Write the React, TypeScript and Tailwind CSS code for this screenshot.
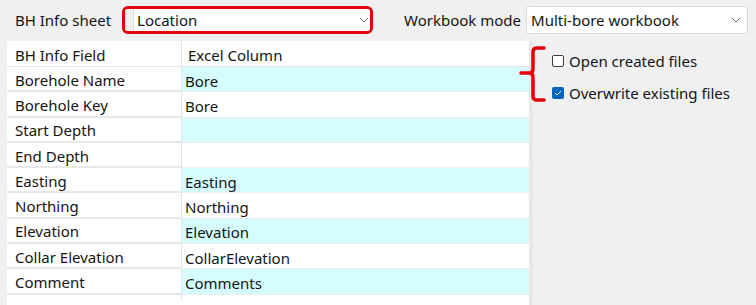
import React from 'react';

const rows = [
  { field: 'Borehole Name', column: 'Bore' },
  { field: 'Borehole Key', column: 'Bore' },
  { field: 'Start Depth', column: '' },
  { field: 'End Depth', column: '' },
  { field: 'Easting', column: 'Easting' },
  { field: 'Northing', column: 'Northing' },
  { field: 'Elevation', column: 'Elevation' },
  { field: 'Collar Elevation', column: 'CollarElevation' },
  { field: 'Comment', column: 'Comments' },
];

const Chevron = () => (
  <svg width="10" height="6" viewBox="0 0 10 6" fill="none" stroke="#6b6b6b" strokeWidth="1">
    <path d="M1 1l4 4 4-4" />
  </svg>
);

const App = () => {
  return (
    <div className="relative w-[756px] h-[305px] overflow-hidden bg-[#f0f0f0] font-['Noto_Sans',sans-serif] text-[15px] leading-[20px] text-[#141414]">
      {/* top bar */}
      <div className="flex items-center h-[41px] pl-[15px] pb-[1px]">
        <span>BH Info sheet</span>
        <div className="ml-[11px] w-[251px] h-[28px] border-[3px] border-[#e4000c] rounded-[6px] flex overflow-hidden">
          <div className="w-[9px] bg-[#f0f0f0] border-r border-[#d9d9d9]" />
          <div className="flex-1 bg-white flex items-center justify-between pl-[3px] pr-[1px]">
            <span>Location</span>
            <Chevron />
          </div>
        </div>
        <span className="ml-[31px]">Workbook mode</span>
        <div className="ml-[5px] w-[222px] h-[28px] bg-white border border-[#d9d9d9] rounded-[3px] flex items-center justify-between pl-[4px] pr-[6px]">
          <span>Multi-bore workbook</span>
          <Chevron />
        </div>
      </div>

      <div className="flex">
        {/* table */}
        <div className="ml-[7px] w-[522px] h-[264px] bg-white">
          <div className="flex h-[26px] border-b border-[#e6e6e6]">
            <div className="w-[175px] border-r border-[#e3e3e3] pl-[8px] flex items-center pt-[2px]">BH Info Field</div>
            <div className="flex-1 pl-[6px] flex items-center pt-[2px]">Excel Column</div>
          </div>
          {rows.map((r, i) => (
            <div key={r.field} className="flex h-[25.3px]">
              <div className="w-[175px] border-r border-[#e3e3e3] border-b-2 border-b-[#e8e8e8] pl-[8px] flex items-center pt-[2px]">
                {r.field}
              </div>
              <div
                className={`flex-1 pl-[3px] flex items-center pt-[3px] border-b border-[#ededed] ${i % 2 === 0 ? 'bg-[#d6fdfe]' : 'bg-white'}`}
              >
                {r.column}
              </div>
            </div>
          ))}
          <div className="w-[175px] h-[6px] border-r border-[#e3e3e3]" />
        </div>
        <div className="w-[4px] h-[264px] bg-[#e8e8e8]" />

        {/* options */}
        <div className="flex flex-col gap-[12px] pt-[10px] pl-[19px]">
          <label className="flex items-center gap-[5px]">
            <span className="w-[12px] h-[12px] rounded-[2px] border border-[#3b3b3b] bg-white" />
            <span>Open created files</span>
          </label>
          <label className="flex items-center gap-[5px]">
            <span className="w-[12px] h-[12px] rounded-[2px] bg-[#0067c0] flex items-center justify-center">
              <svg width="8" height="6" viewBox="0 0 8 6" fill="none" stroke="white" strokeWidth="1">
                <path d="M1 3l2 2 4-4" />
              </svg>
            </span>
            <span>Overwrite existing files</span>
          </label>
        </div>
      </div>

      {/* red brace annotation */}
      <svg className="absolute left-[518px] top-[45px]" width="30" height="58" viewBox="0 0 30 58" fill="none" stroke="#e4000c" strokeWidth="3.5" strokeLinecap="round">
        <path d="M26 3H19Q15 3 15 7V24Q15 28 11 28H3M26 55H19Q15 55 15 51V32Q15 28 11 28" />
      </svg>
    </div>
  );
};

export default App;
